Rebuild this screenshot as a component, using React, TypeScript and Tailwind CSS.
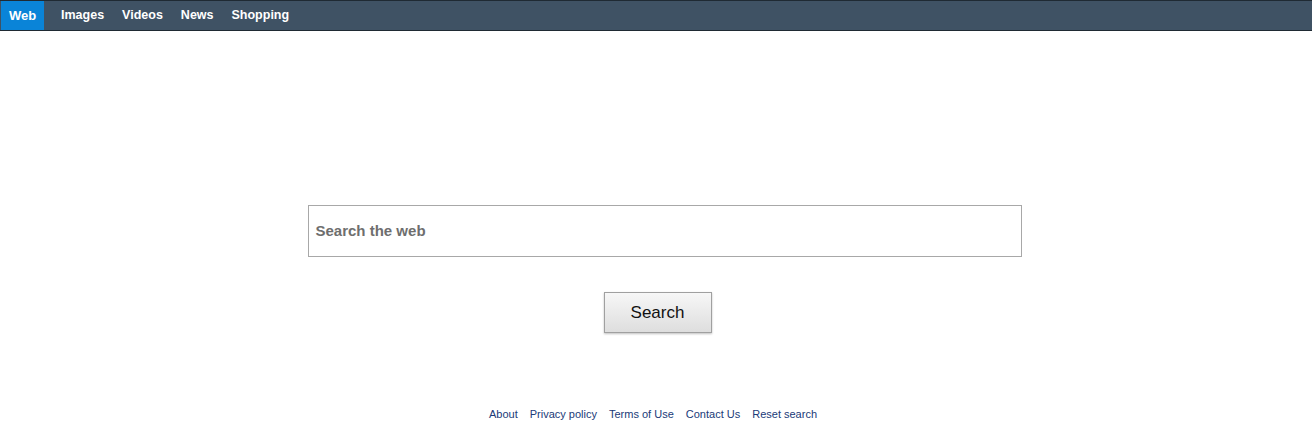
import React from 'react';

const tabs = ['Images', 'Videos', 'News', 'Shopping'];
const footerLinks = ['About', 'Privacy policy', 'Terms of Use', 'Contact Us', 'Reset search'];

const App: React.FC = () => {
  return (
    <div className="w-full h-[436px] bg-white overflow-hidden" style={{ fontFamily: '"Liberation Sans", Arial, sans-serif' }}>
      {/* top nav */}
      <div className="h-[31px] bg-[#3f5264] border-t border-b border-[#1f2a33] flex items-stretch pl-px">
        <div className="bg-[#0a84d8] text-white font-bold text-[13px] px-2 flex items-center w-[43px]">Web</div>
        <div className="flex items-center gap-[18px] ml-[17px]">
          {tabs.map((t) => (
            <span key={t} className="text-white font-bold text-[12.5px]">{t}</span>
          ))}
        </div>
      </div>

      {/* search */}
      <div className="flex flex-col items-center">
        <div className="mt-[174px] pl-[17px]">
          <div className="w-[714px] h-[52px] border border-[#a8a8a8] flex items-center px-[7px]">
            <span className="text-[15px] font-bold text-[#6e6e6e]">Search the web</span>
          </div>
        </div>
        <button className="mt-[35px] ml-[3px] w-[108px] h-[41px] border border-[#a0a0a0] bg-gradient-to-b from-[#f7f7f7] to-[#dedede] shadow-[0_1px_2px_rgba(0,0,0,0.25)] text-[17px] text-[#111]">
          Search
        </button>
        <div className="mt-[73px] mr-[6px] flex gap-[12px] text-[11px] text-[#203a78]">
          {footerLinks.map((l) => (
            <span key={l}>{l}</span>
          ))}
        </div>
      </div>
    </div>
  );
};

export default App;
